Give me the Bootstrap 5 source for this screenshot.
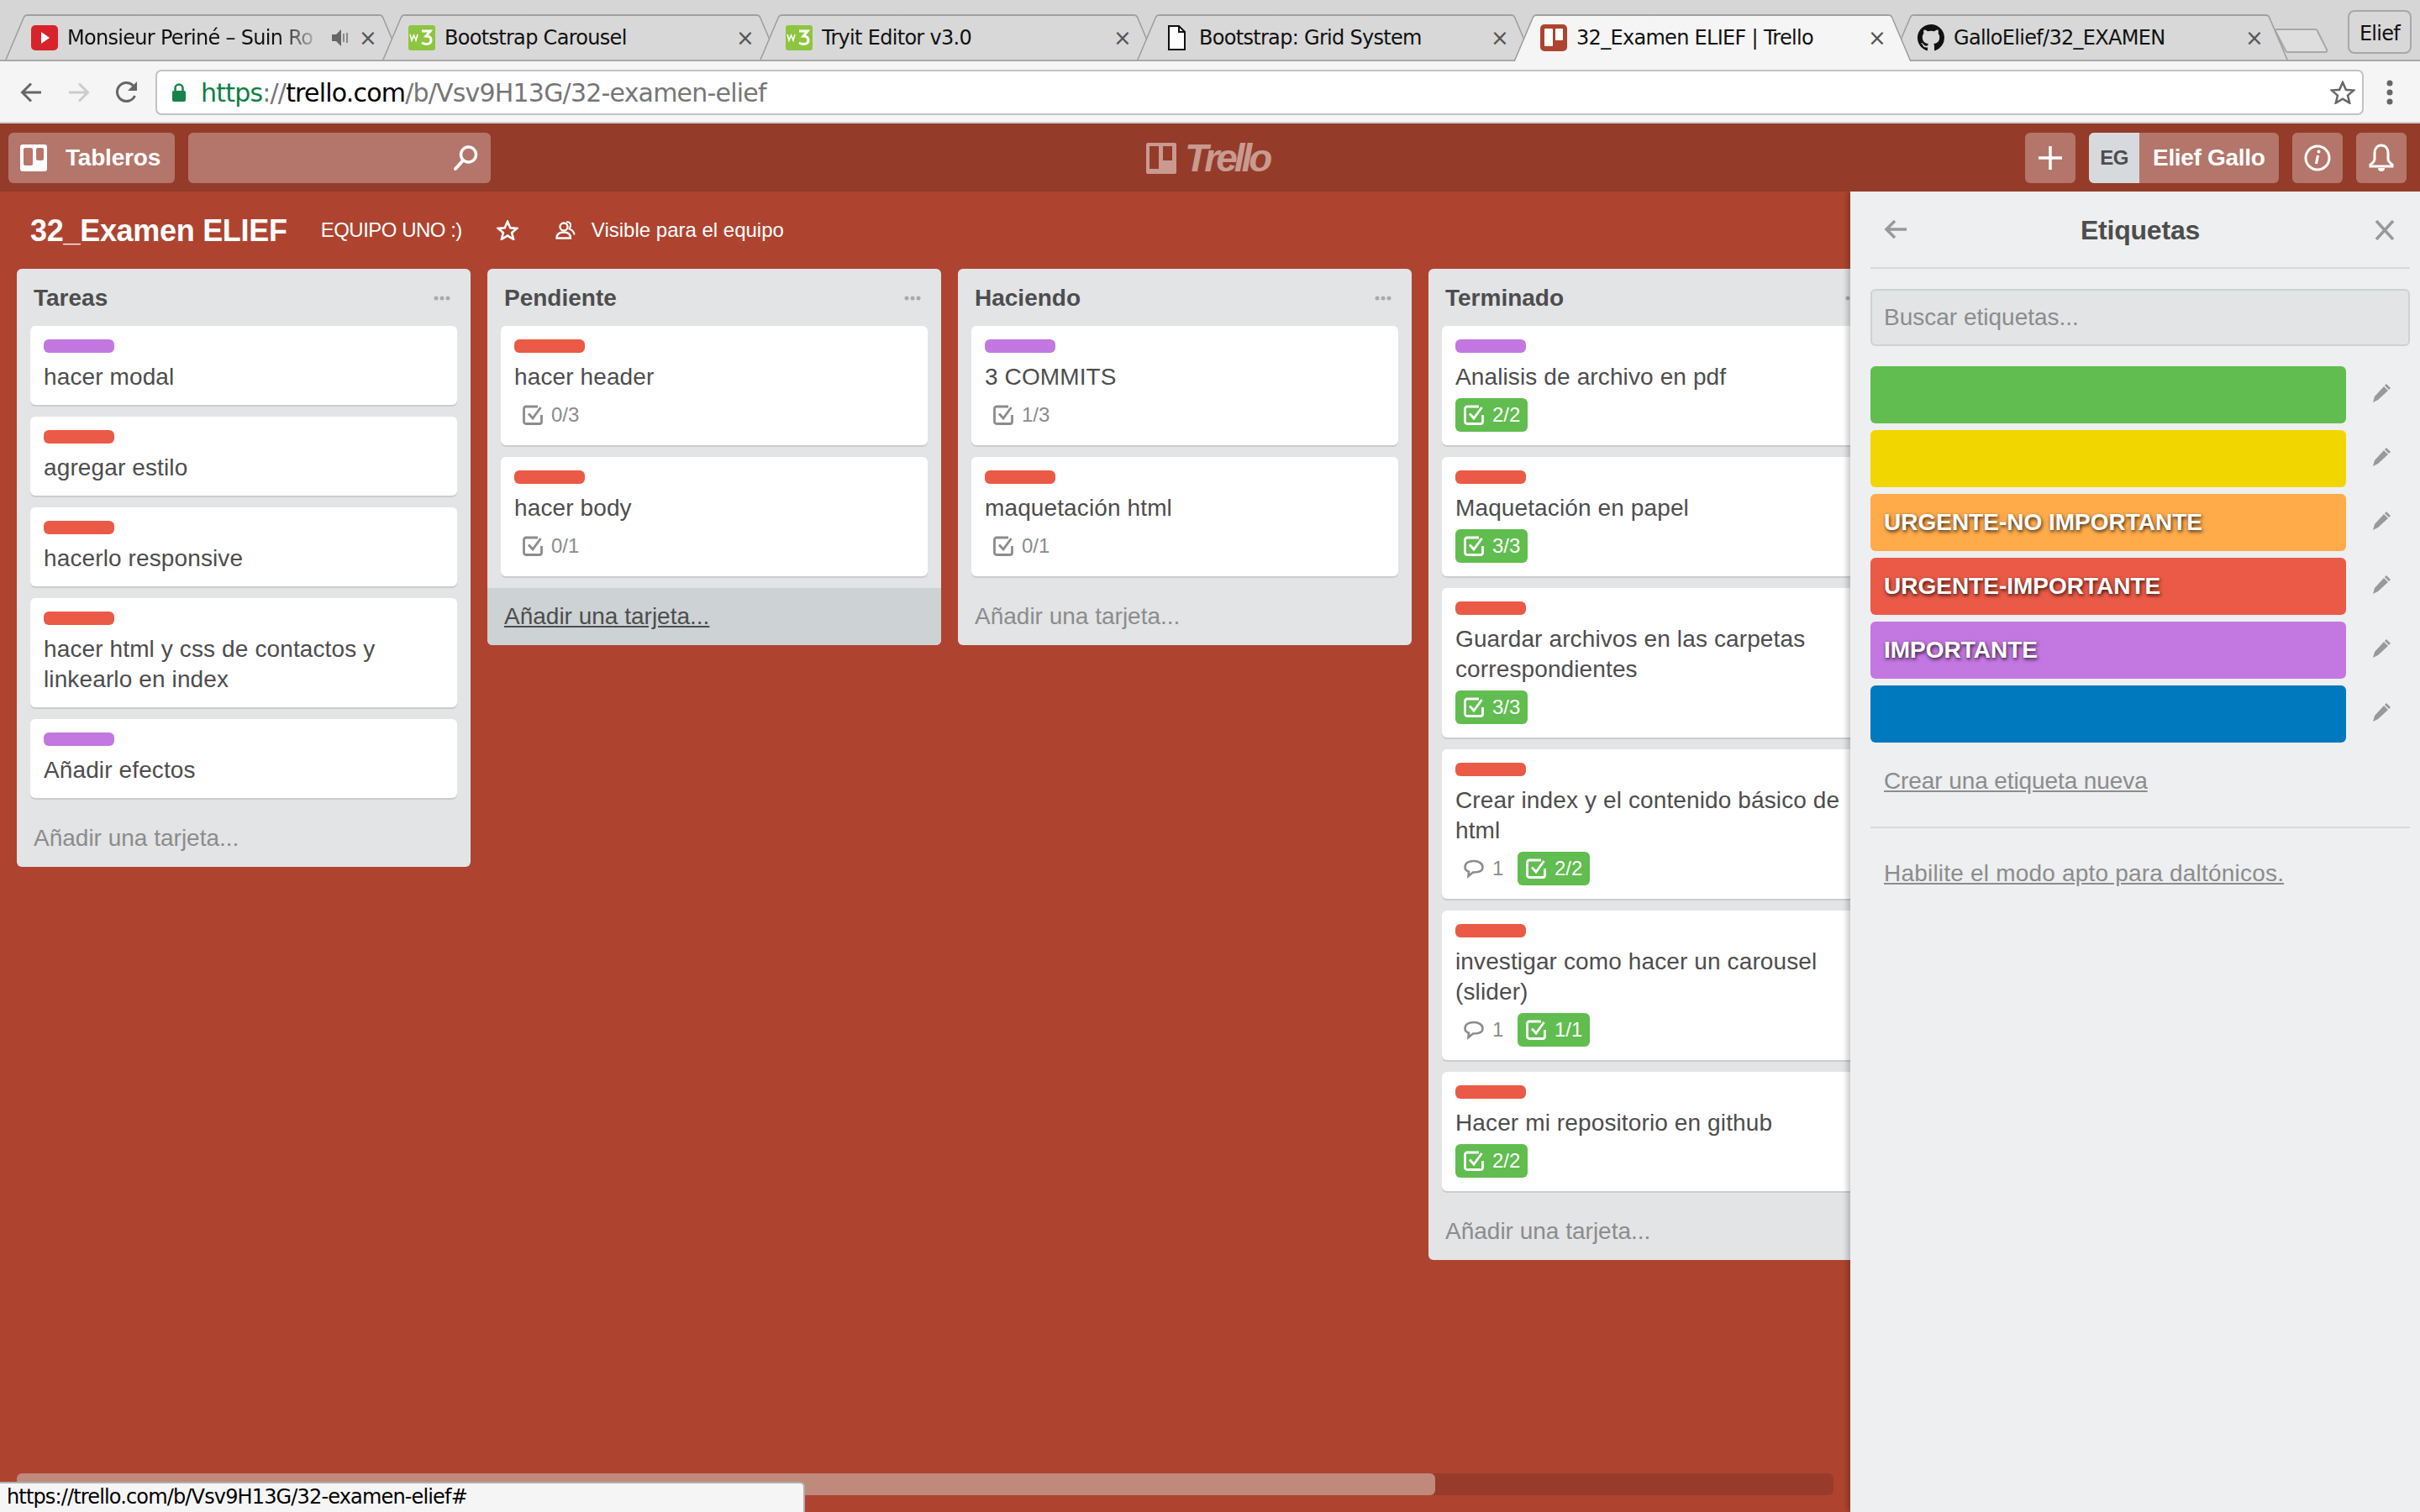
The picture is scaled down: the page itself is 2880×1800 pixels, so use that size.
<!DOCTYPE html>
<html lang="en">
<head>
  <meta charset="UTF-8">
  <title>32_Examen ELIEF | Trello</title>
  <link href="https://cdn.jsdelivr.net/npm/bootstrap@5.3.3/dist/css/bootstrap.min.css" rel="stylesheet">
  <style>
    html, body { height: 100%; }
    body {
      height: 1800px;
      overflow: hidden;
      background: #ae4430;
      font-family: "Liberation Sans", Arial, sans-serif;
      font-size: 28px;
      color: #4d4d4d;
    }
    /* browser chrome */
    .tab-strip {
      height: 73px;
      background: #d6d6d6;
      padding: 17px 0 0 5px;
      position: relative;
      font-family: "DejaVu Sans", sans-serif;
    }
    .tab-strip::after {
      content: "";
      position: absolute;
      left: 0; right: 0; bottom: 0;
      height: 2px;
      background: #a8a8a8;
    }
    .chrome-tab {
      position: relative;
      width: 474px;
      height: 56px;
      margin-right: -25px;
      flex: none;
      padding: 0 32px 0 32px;
      font-size: 24px;
      color: #111;
      white-space: nowrap;
    }
    .chrome-tab::before, .chrome-tab::after {
      content: "";
      position: absolute;
      top: 0; bottom: 0;
      width: 60%;
      background: #d8d8d8;
      border-top: 2px solid #a0a0a0;
      z-index: 0;
    }
    .chrome-tab::before { left: 0; border-left: 2px solid #a0a0a0; transform: skewX(-23deg); transform-origin: bottom left; border-top-left-radius: 4px; }
    .chrome-tab::after { right: 0; border-right: 2px solid #a0a0a0; transform: skewX(23deg); transform-origin: bottom right; border-top-right-radius: 4px; }
    .chrome-tab.is-active { z-index: 2; }
    .chrome-tab.is-active::before, .chrome-tab.is-active::after { background: #f5f5f5; }
    .chrome-tab > * { position: relative; z-index: 1; }
    .tab-title { flex: 1; overflow: hidden; letter-spacing: -0.7px; }
    .tab-title.fades { -webkit-mask-image: linear-gradient(90deg, #000 82%, transparent 100%); flex: none; width: 305px; }
    .tab-close { width: 20px; color: #555; font-size: 26px; line-height: 1; text-align: center; margin-left: 12px; }
    .tab-ico { width: 32px; height: 32px; margin-right: 11px; flex: none; }
    .new-tab { width: 64px; height: 30px; margin: 16px 0 0 8px; flex: none; }
    .profile-btn {
      position: absolute;
      left: 2794px; top: 12px;
      width: 76px; height: 52px;
      padding-top: 3px;
      border: 2px solid #a8a8a8;
      border-radius: 8px;
      background: #d8d8d8;
      font-size: 24px;
      color: #111;
      letter-spacing: -0.7px;
    }
    .tool-bar { height: 74px; background: #f5f5f5; padding: 10px 0 8px 0; border-bottom: 2px solid #cfcfcf; }
    .tool-btn { flex: none; display: block; }
    .tool-back { margin-left: 24px; }
    .tool-forward { margin-left: 31px; }
    .tool-reload { margin-left: 30px; }
    .tool-menu { margin-left: 26px; }
    .omni {
      width: 2628px;
      height: 54px;
      margin-left: 20px;
      border: 2px solid #c2c2c2;
      border-radius: 7px;
      background: #fff;
      padding-left: 18px;
      font-family: "DejaVu Sans", sans-serif;
      font-size: 30px;
      color: #767676;
      white-space: nowrap;
    }
    .omni .secure { color: #0b8043; }
    .omni .host { color: #000; }
    .url-text { letter-spacing: -0.8px; margin-left: 18px; }
    /* trello header */
    .top-bar { height: 81px; background: #943b2a; padding: 11px 16px 10px 10px; }
    .bar-side { flex: 1 1 0; }
    .top-btn {
      height: 60px;
      background: rgba(255,255,255,.3);
      border-radius: 6px;
      color: #fff;
      font-weight: 700;
      flex: none;
    }
    .boards-btn { width: 198px; padding-left: 14px; gap: 22px; letter-spacing: -0.2px; }
    .search-box { width: 360px; margin-left: 16px; justify-content: flex-end; padding-right: 14px; }
    .square-btn { width: 60px; justify-content: center; margin-left: 16px; }
    .user-btn { width: 226px; overflow: hidden; margin-left: 16px; letter-spacing: -0.3px; }
    .user-initials { width: 60px; height: 60px; background: #d6dadc; color: #4d4d4d; font-size: 24px; letter-spacing: -0.5px; margin-right: 16px; }
    .brand-logo { color: #c99a90; gap: 10px; width: 150px; margin-left: 4px; }
    .brand-word { font-style: italic; font-weight: 700; font-size: 46px; line-height: 1; letter-spacing: -4px; }
    /* board */
    .board { height: 1572px; position: relative; overflow: hidden; }
    .board-head { height: 92px; padding-left: 36px; color: #fff; }
    .board-name { font-size: 36px; font-weight: 700; letter-spacing: -0.3px; margin: 2px 40px 0 0; }
    .board-meta { font-size: 24px; letter-spacing: -0.5px; }
    .board-visible { font-size: 24px; margin-left: 19px; }
    .board-star { margin-left: 41px; }
    .board-team { margin-left: 44px; }
    .lists-row { padding-left: 20px; gap: 20px; align-items: flex-start; }
    .list-col { width: 540px; flex: none; background: #e2e4e6; border-radius: 6px; }
    .list-head { height: 68px; padding: 2px 24px 0 20px; font-weight: 700; color: #4d4d4d; }
    .list-dots { color: #999; width: 20px; }
    .task-card {
      margin: 0 16px 14px;
      padding: 16px 16px 8px;
      background: #fff;
      border-radius: 6px;
      box-shadow: 0 2px 0 #ccc;
      color: #4d4d4d;
    }
    .task-label { width: 84px; height: 16px; border-radius: 6px; margin-bottom: 11px; }
    .c-green { background: #61bd4f; }
    .c-yellow { background: #f2d600; }
    .c-orange { background: #ffab4a; }
    .c-red { background: #eb5a46; }
    .c-purple { background: #c377e0; }
    .c-blue { background: #0079bf; }
    .task-title { line-height: 36px; margin-bottom: 7px; letter-spacing: 0.12px; }
    .task-badges { height: 40px; margin-bottom: 8px; font-size: 24px; color: #8c8c8c; }
    .check-badge { height: 40px; width: 86px; padding-left: 10px; gap: 10px; border-radius: 6px; flex: none; }
    .check-badge.is-done { background: #61bd4f; color: #fff; }
    .comment-badge { width: 74px; padding-left: 10px; gap: 10px; flex: none; }
    .add-card { height: 68px; padding: 0 20px; color: #8c8c8c; border-radius: 0 0 6px 6px; }
    .add-card.is-hover { background: #cdd2d4; color: #4d4d4d; }
    .add-card.is-hover span { text-decoration: underline; }
    /* side menu */
    .side-panel {
      position: absolute;
      left: 2202px; top: 0; bottom: 0; right: 0;
      background: #edeff0;
      box-shadow: -4px 0 6px rgba(0,0,0,.2);
      padding: 0 12px 0 24px;
    }
    .side-head { height: 92px; padding-top: 3px; border-bottom: 2px solid #d6dadc; position: relative; }
    .side-back { position: absolute; left: 16px; top: 33px; }
    .side-close { position: absolute; right: 18px; top: 34px; }
    .side-title { flex: 1; text-align: center; font-size: 32px; font-weight: 700; letter-spacing: -0.2px; color: #4d4d4d; margin: 0; }
    .label-search {
      display: block;
      width: 100%;
      height: 68px;
      margin: 24px 0;
      background: #e2e4e6;
      border: 2px solid #cdd2d4;
      border-radius: 6px;
      padding: 0 14px;
      font-size: 28px;
      color: #4d4d4d;
    }
    .label-search::placeholder { color: #8c8c8c; }
    .label-row { height: 68px; margin-bottom: 8px; }
    .label-bar {
      width: 566px;
      height: 68px;
      border-radius: 6px;
      padding-left: 16px;
      color: #fff;
      font-weight: 700;
      text-shadow: 1px 2px 4px rgba(0,0,0,.8);
    }
    .label-edit { margin: -4px 0 0 32px; }
    .side-link { color: #8c8c8c; text-decoration: underline; padding-left: 16px; display: block; }
    .link-new { letter-spacing: -0.1px; }
    .link-colorblind { margin-top: 33px; letter-spacing: 0.2px; }
    .link-wrap { height: 94px; border-bottom: 2px solid #d6dadc; padding-top: 17px; }
    /* bottom overlays */
    .h-track { position: absolute; left: 20px; width: 2162px; bottom: 20px; height: 26px; background: rgba(0,0,0,.12); border-radius: 6px; }
    .h-thumb { height: 26px; width: 1688px; background: #bf8a7b; border-radius: 6px; }
    .status-pop {
      position: absolute;
      left: 0; bottom: 0;
      width: 958px; height: 36px;
      background: #f5f5f5;
      border: 2px solid #b0b0b0;
      border-left: 0; border-bottom: 0;
      border-top-right-radius: 6px;
      padding-left: 8px;
      font-family: "DejaVu Sans", sans-serif;
      font-size: 24px;
      line-height: 33px;
      color: #000;
      letter-spacing: -0.85px;
    }
  </style>
</head>
<body>
  <svg width="0" height="0" class="position-absolute">
    <symbol id="ico-check" viewBox="0 0 24 24"><path d="M22.500 12v8a2.500 2.500 0 0 1-2.500 2.500H4A2.500 2.500 0 0 1 1.500 20V4.500A2.500 2.500 0 0 1 4 2h14" fill="none" stroke="currentColor" stroke-width="2.800"/><path d="M7 10.500l5 5.500L21.500 3" fill="none" stroke="currentColor" stroke-width="2.800"/></symbol>
    <symbol id="ico-comment" viewBox="0 0 24 24"><path d="M12 3C6 3 1.500 5.500 1.500 10.500c0 2.500 1.800 4.300 4.500 5.300L5.500 21l5.500-4.500H12c5.500 0 10.500-1.500 10.500-6S18 3 12 3z" fill="none" stroke="currentColor" stroke-width="2.600"/></symbol>
    <symbol id="ico-pencil" viewBox="0 0 22 22"><path d="M0 22l2-7L13 3l5 5L6 19z M16 0l5 5-2 2-5-5z" fill="currentColor"/></symbol>
    <symbol id="ico-w3" viewBox="0 0 32 32"><rect width="32" height="30" y="1" rx="3" fill="#8cc63f"/><path d="M2 12l2 7 2.500-6 2.500 6 2-7" fill="none" stroke="#fff" stroke-width="1.600"/><path d="M16 8h10l-5 6c4 0 6 2 6 5 0 4-5 6-11 3" fill="none" stroke="#fff" stroke-width="3"/></symbol>
  </svg>

  <!-- tabs -->
  <div class="tab-strip d-flex">
    <div class="chrome-tab d-flex align-items-center">
      <svg class="tab-ico" viewBox="0 0 32 32"><rect width="32" height="30" y="1" rx="5" fill="#d8232a"/><path d="M12 9l10 7-10 7z" fill="#fff"/></svg>
      <span class="tab-title fades">Monsieur Periné – Suin Ro</span>
      <svg width="20" height="22" viewBox="0 0 20 22" class="ms-auto"><path d="M0 7h5l6-6v20l-6-6H0z" fill="#666"/><path d="M14 6v10M18 5v12" stroke="#888" stroke-width="2"/></svg>
      <span class="tab-close">×</span>
    </div>
    <div class="chrome-tab d-flex align-items-center">
      <svg class="tab-ico"><use href="#ico-w3"/></svg>
      <span class="tab-title">Bootstrap Carousel</span>
      <span class="tab-close">×</span>
    </div>
    <div class="chrome-tab d-flex align-items-center">
      <svg class="tab-ico"><use href="#ico-w3"/></svg>
      <span class="tab-title">Tryit Editor v3.0</span>
      <span class="tab-close">×</span>
    </div>
    <div class="chrome-tab d-flex align-items-center">
      <svg class="tab-ico" viewBox="0 0 32 32"><path d="M7 2h12l7 7v21H7z" fill="#fff" stroke="#111" stroke-width="2"/><path d="M19 2v7h7" fill="none" stroke="#111" stroke-width="2"/></svg>
      <span class="tab-title">Bootstrap: Grid System</span>
      <span class="tab-close">×</span>
    </div>
    <div class="chrome-tab is-active d-flex align-items-center">
      <svg class="tab-ico" viewBox="0 0 32 32"><rect width="32" height="32" rx="5" fill="#ae4430"/><rect x="5" y="5" width="10" height="21" rx="1" fill="#fff"/><rect x="18" y="5" width="9" height="14" rx="1" fill="#fff"/></svg>
      <span class="tab-title">32_Examen ELIEF | Trello</span>
      <span class="tab-close">×</span>
    </div>
    <div class="chrome-tab d-flex align-items-center">
      <svg class="tab-ico" viewBox="0 0 16 16"><path fill="#111" d="M8 0C3.580 0 0 3.580 0 8c0 3.540 2.290 6.530 5.470 7.590.4.070.55-.17.55-.38 0-.19-.01-.82-.01-1.490-2.010.37-2.530-.49-2.690-.94-.09-.23-.48-.94-.82-1.130-.28-.15-.68-.52-.01-.53.630-.01 1.080.58 1.230.82.720 1.210 1.870.870 2.330.660.070-.520.280-.870.510-1.070-1.780-.2-3.640-.890-3.640-3.950 0-.870.310-1.590.820-2.150-.08-.2-.36-1.020.08-2.120 0 0 .67-.21 2.200.82.640-.18 1.320-.27 2-.27s1.360.09 2 .27c1.530-1.040 2.200-.82 2.200-.82.440 1.100.16 1.920.08 2.120.51.560.82 1.270.82 2.150 0 3.070-1.870 3.750-3.650 3.950.290.250.540.730.540 1.480 0 1.070-.01 1.930-.01 2.200 0 .210.150.460.550.380A8.010 8.010 0 0 0 16 8c0-4.420-3.580-8-8-8z"/></svg>
      <span class="tab-title">GalloElief/32_EXAMEN</span>
      <span class="tab-close">×</span>
    </div>
    <svg class="new-tab" viewBox="0 0 64 30"><path d="M2 2h46a3 3 0 0 1 3 2l11 22a2 2 0 0 1-2 3H16a3 3 0 0 1-3-2L1 4a1.500 1.500 0 0 1 1-2z" fill="#dedede" stroke="#a8a8a8" stroke-width="2"/></svg>
    <div class="profile-btn d-flex align-items-center justify-content-center">Elief</div>
  </div>

  <!-- toolbar -->
  <div class="tool-bar d-flex align-items-center">
    <svg class="tool-btn tool-back" width="26" height="24" viewBox="0 0 26 24"><path d="M25 12H3M13 1.500L2.500 12 13 22.500" fill="none" stroke="#666" stroke-width="3"/></svg>
    <svg class="tool-btn tool-forward" width="26" height="24" viewBox="0 0 26 24"><path d="M1 12h22M13 1.500L23.500 12 13 22.500" fill="none" stroke="#ccc" stroke-width="3"/></svg>
    <svg class="tool-btn tool-reload" width="28" height="28" viewBox="0 0 28 28"><path d="M23.500 18A11 11 0 1 1 21.500 6" fill="none" stroke="#666" stroke-width="3"/><path d="M26 1v11H15z" fill="#666"/></svg>
    <div class="omni d-flex align-items-center">
      <svg width="16" height="22" viewBox="0 0 16 22"><path d="M3.500 10V6a4.500 4.500 0 0 1 9 0v4" fill="none" stroke="#188349" stroke-width="2.500"/><rect y="9" width="16" height="13" rx="2" fill="#188349"/></svg>
      <span class="url-text"><span class="secure">https</span>://<span class="host">trello.com</span>/b/Vsv9H13G/32-examen-elief</span>
      <svg class="ms-auto me-2" width="30" height="28" viewBox="0 0 30 28"><path d="M15 2l3.800 8.800 9.200.8-7 6 2.200 9L15 21.700 6.800 26.600 9 17.600l-7-6 9.200-.8z" fill="none" stroke="#666" stroke-width="2.500"/></svg>
    </div>
    <svg class="tool-btn tool-menu" width="10" height="30" viewBox="0 0 10 30"><circle cx="5" cy="4" r="3.500" fill="#666"/><circle cx="5" cy="15" r="3.500" fill="#666"/><circle cx="5" cy="26" r="3.500" fill="#666"/></svg>
  </div>

  <!-- trello top bar -->
  <div class="top-bar d-flex align-items-center">
    <div class="bar-side d-flex">
      <div class="top-btn boards-btn d-flex align-items-center">
        <svg width="32" height="32" viewBox="0 0 32 32"><rect width="32" height="32" rx="3" fill="#fff"/><rect x="4" y="4" width="11" height="21" rx="2" fill="#b8766a"/><rect x="19" y="4" width="9" height="15" rx="2" fill="#b8766a"/></svg>
        Tableros
      </div>
      <div class="top-btn search-box d-flex align-items-center">
        <svg width="32" height="32" viewBox="0 0 32 32"><circle cx="19.500" cy="12" r="9" fill="none" stroke="#fff" stroke-width="3.500"/><path d="M13 19L4 29" stroke="#fff" stroke-width="4" stroke-linecap="round"/></svg>
      </div>
    </div>
    <div class="brand-logo d-flex align-items-center">
      <svg width="36" height="37" viewBox="0 0 36 37" class="flex-shrink-0"><rect width="36" height="37" rx="2" fill="#c99a90"/><rect x="4" y="4" width="11" height="27" fill="#943b2a"/><rect x="20" y="4" width="11" height="17" fill="#943b2a"/></svg>
      <span class="brand-word">Trello</span>
    </div>
    <div class="bar-side d-flex justify-content-end">
      <div class="top-btn square-btn d-flex align-items-center">
        <svg width="30" height="30" viewBox="0 0 30 30"><path d="M15 1v28M1 15h28" stroke="#fff" stroke-width="3.500"/></svg>
      </div>
      <div class="top-btn user-btn d-flex align-items-center">
        <span class="user-initials d-flex align-items-center justify-content-center">EG</span>
        Elief Gallo
      </div>
      <div class="top-btn square-btn d-flex align-items-center">
        <svg width="32" height="32" viewBox="0 0 32 32"><circle cx="16" cy="16" r="14" fill="none" stroke="#fff" stroke-width="3"/><path d="M16.500 13l-2 10" stroke="#fff" stroke-width="3.200"/><circle cx="17.500" cy="8.500" r="2" fill="#fff"/></svg>
      </div>
      <div class="top-btn square-btn d-flex align-items-center">
        <svg width="30" height="34" viewBox="0 0 30 34"><path d="M15 2c-5 0-8 4-8 9v7c0 3-2 5-5 7v2h26v-2c-3-2-5-4-5-7v-7c0-5-3-9-8-9z" fill="none" stroke="#fff" stroke-width="3"/><path d="M11 29a4 4 0 0 0 8 0z" fill="#fff"/></svg>
      </div>
    </div>
  </div>

  <div class="board">
    <div class="board-head d-flex align-items-center">
      <h1 class="board-name">32_Examen ELIEF</h1>
      <span class="board-meta">EQUIPO UNO :)</span>
      <svg class="board-star" width="26" height="24" viewBox="0 0 30 28"><path d="M15 2l3.800 8.800 9.200.8-7 6 2.200 9L15 21.700 6.800 26.600 9 17.600l-7-6 9.200-.8z" fill="none" stroke="#fff" stroke-width="3"/></svg>
      <svg class="board-team" width="24" height="22" viewBox="0 0 24 22"><circle cx="10" cy="7" r="4.500" fill="none" stroke="#fff" stroke-width="2.300"/><path d="M1.500 20.500c0-5 3.500-7 8.500-7s8 2 8 7z" fill="none" stroke="#fff" stroke-width="2.300"/><path d="M13 1.500c4-1 6 2 4.500 6l-1 2c3 1 5.500 3 6 7" fill="none" stroke="#fff" stroke-width="2"/></svg>
      <span class="board-visible">Visible para el equipo</span>
    </div>

    <div class="lists-row d-flex" id="listsRow"></div>

    <aside class="side-panel">
      <div class="side-head d-flex align-items-center">
        <svg class="side-back" width="28" height="24" viewBox="0 0 28 24"><path d="M27 12H4M13 2L3 12l10 10" fill="none" stroke="#999" stroke-width="3.500"/></svg>
        <h2 class="side-title">Etiquetas</h2>
        <svg class="side-close" width="24" height="24" viewBox="0 0 24 24"><path d="M2 1l20 22M22 1L2 23" stroke="#999" stroke-width="3.500"/></svg>
      </div>
      <input class="label-search" type="text" placeholder="Buscar etiquetas...">
      <div id="labelRows"></div>
      <div class="link-wrap"><a class="side-link link-new" href="#">Crear una etiqueta nueva</a></div>
      <a class="side-link link-colorblind" href="#">Habilite el modo apto para daltónicos.</a>
    </aside>

    <div class="h-track"><div class="h-thumb"></div></div>
  </div>

  <div class="status-pop">https://trello.com/b/Vsv9H13G/32-examen-elief#</div>

  <script>
    const lists = [
      { name: "Tareas", cards: [
        { c: "purple", t: "hacer modal" },
        { c: "red", t: "agregar estilo" },
        { c: "red", t: "hacerlo responsive" },
        { c: "red", t: "hacer html y css de contactos y linkearlo en index" },
        { c: "purple", t: "Añadir efectos" }
      ]},
      { name: "Pendiente", hover: true, cards: [
        { c: "red", t: "hacer header", check: "0/3" },
        { c: "red", t: "hacer body", check: "0/1" }
      ]},
      { name: "Haciendo", cards: [
        { c: "purple", t: "3 COMMITS", check: "1/3" },
        { c: "red", t: "maquetación html", check: "0/1" }
      ]},
      { name: "Terminado", cards: [
        { c: "purple", t: "Analisis de archivo en pdf", check: "2/2", done: true },
        { c: "red", t: "Maquetación en papel", check: "3/3", done: true },
        { c: "red", t: "Guardar archivos en las carpetas correspondientes", check: "3/3", done: true },
        { c: "red", t: "Crear index y el contenido básico de html", check: "2/2", done: true, comments: 1 },
        { c: "red", t: "investigar como hacer un carousel (slider)", check: "1/1", done: true, comments: 1 },
        { c: "red", t: "Hacer mi repositorio en github", check: "2/2", done: true }
      ]}
    ];

    function cardHtml(card) {
      let badges = "";
      if (card.check) {
        const comment = card.comments ? `<span class="comment-badge d-flex align-items-center"><svg width="24" height="24"><use href="#ico-comment"/></svg>${card.comments}</span>` : "";
        badges = `<div class="task-badges d-flex align-items-center">${comment}
          <span class="check-badge d-flex align-items-center ${card.done ? "is-done" : ""}"><svg width="24" height="24"><use href="#ico-check"/></svg>${card.check}</span></div>`;
      }
      return `<div class="task-card"><div class="task-label c-${card.c}"></div><div class="task-title">${card.t}</div>${badges}</div>`;
    }

    document.getElementById("listsRow").innerHTML = lists.map(list => `
      <section class="list-col">
        <div class="list-head d-flex align-items-center justify-content-between">${list.name}
          <svg class="list-dots" height="6" viewBox="0 0 20 6"><circle cx="3" cy="3" r="2.500" fill="#aaa"/><circle cx="10" cy="3" r="2.500" fill="#aaa"/><circle cx="17" cy="3" r="2.500" fill="#aaa"/></svg>
        </div>
        ${list.cards.map(cardHtml).join("")}
        <div class="add-card d-flex align-items-center ${list.hover ? "is-hover" : ""}"><span>Añadir una tarjeta...</span></div>
      </section>`).join("");

    const labels = [
      ["green", ""], ["yellow", ""], ["orange", "URGENTE-NO IMPORTANTE"],
      ["red", "URGENTE-IMPORTANTE"], ["purple", "IMPORTANTE"], ["blue", ""]
    ];
    document.getElementById("labelRows").innerHTML = labels.map(([c, text]) => `
      <div class="label-row d-flex align-items-center">
        <div class="label-bar c-${c} d-flex align-items-center">${text}</div>
        <svg class="label-edit" width="22" height="22" color="#999"><use href="#ico-pencil"/></svg>
      </div>`).join("");
  </script>
  <script src="https://cdn.jsdelivr.net/npm/bootstrap@5.3.3/dist/js/bootstrap.bundle.min.js"></script>
</body>
</html>
